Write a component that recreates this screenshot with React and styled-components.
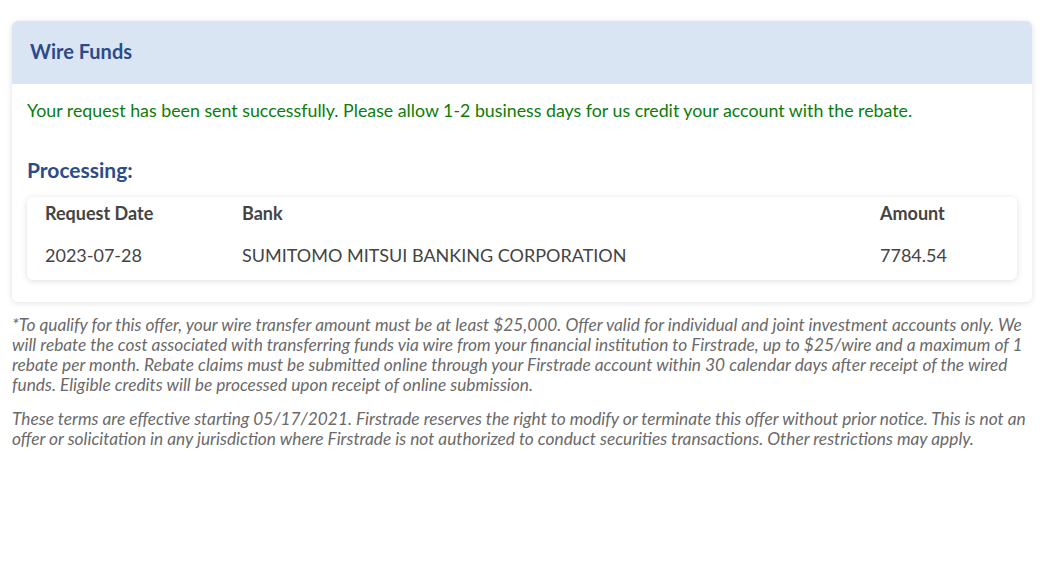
import React from "react";
import styled, { createGlobalStyle } from "styled-components";

const Global = createGlobalStyle`
  html, body { margin: 0; padding: 0; background: #fff; }
  body { font-family: Lato, "Open Sans", Arial, sans-serif; }
  * { box-sizing: border-box; }
`;

const Page = styled.div`
  padding: 21px 28px 0 12px;
`;

const Card = styled.section`
  background: #fff;
  border-radius: 6px;
  box-shadow: 0 1px 6px rgba(0, 0, 0, 0.12);
  overflow: hidden;
`;

const CardHeader = styled.header`
  height: 63px;
  background: #dae5f3;
  display: flex;
  align-items: center;
  padding: 0 18px 4px;
`;

const Title = styled.h2`
  margin: 0;
  font-size: 20px;
  font-weight: 700;
  color: #2b4c8c;
`;

const CardBody = styled.div`
  padding: 14px 15px 22px;
`;

const Success = styled.p`
  margin: 0;
  font-size: 17.8px;
  line-height: 24px;
  color: #0a7d0a;
`;

const Subtitle = styled.h3`
  margin: 36px 0 15px;
  font-size: 21px;
  line-height: 24px;
  font-weight: 700;
  color: #2b4c8c;
`;

const TableCard = styled.div`
  border-radius: 6px;
  box-shadow: 0 1px 6px rgba(0, 0, 0, 0.13);
  padding: 0 18px;
`;

const Row = styled.div`
  display: grid;
  grid-template-columns: 197px 638px 1fr;
  align-items: center;
  height: ${(p) => (p.$head ? "32px" : "51px")};
  font-size: 18px;
  color: #444;
  font-weight: ${(p) => (p.$head ? 700 : 400)};
`;

const Terms = styled.p`
  margin: 13px 0 0;
  font-size: 17.3px;
  line-height: 20px;
  font-style: italic;
  color: #6a6a6a;
  & + & { margin-top: 14px; }
`;

export default function App() {
  return (
    <Page>
      <Global />
      <Card>
        <CardHeader>
          <Title>Wire Funds</Title>
        </CardHeader>
        <CardBody>
          <Success>
            Your request has been sent successfully. Please allow 1-2 business days for us credit your account with the rebate.
          </Success>
          <Subtitle>Processing:</Subtitle>
          <TableCard>
            <Row $head>
              <span>Request Date</span>
              <span>Bank</span>
              <span>Amount</span>
            </Row>
            <Row>
              <span>2023-07-28</span>
              <span>SUMITOMO MITSUI BANKING CORPORATION</span>
              <span>7784.54</span>
            </Row>
          </TableCard>
        </CardBody>
      </Card>
      <Terms>
        *To qualify for this offer, your wire transfer amount must be at least $25,000. Offer valid for individual and joint investment accounts only. We will rebate the cost associated with transferring funds via wire from your financial institution to Firstrade, up to $25/wire and a maximum of 1 rebate per month. Rebate claims must be submitted online through your Firstrade account within 30 calendar days after receipt of the wired funds. Eligible credits will be processed upon receipt of online submission.
      </Terms>
      <Terms>
        These terms are effective starting 05/17/2021. Firstrade reserves the right to modify or terminate this offer without prior notice. This is not an offer or solicitation in any jurisdiction where Firstrade is not authorized to conduct securities transactions. Other restrictions may apply.
      </Terms>
    </Page>
  );
}
